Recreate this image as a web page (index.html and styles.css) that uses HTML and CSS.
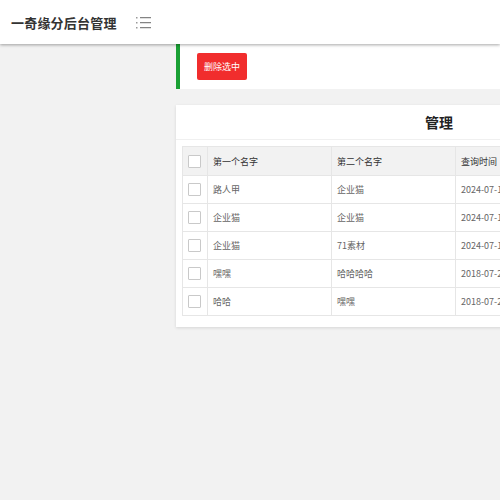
FILE: index.html
```html
<!DOCTYPE html>
<html lang="zh">
<head>
<meta charset="utf-8">
<link rel="stylesheet" href="styles.css">
</head>
<body>
<header class="topbar">
  <div class="brand">一奇缘分后台管理</div>
  <svg class="menu-icon" width="16" height="14" viewBox="0 0 16 14">
    <g fill="#999">
      <rect x="0" y="1" width="1.5" height="1.5"/>
      <rect x="0" y="6" width="1.5" height="1.5"/>
      <rect x="0" y="11" width="1.5" height="1.5"/>
    </g>
    <g fill="#666">
      <rect x="4" y="1.2" width="11" height="1"/>
      <rect x="4" y="6.2" width="11" height="1"/>
      <rect x="4" y="11.2" width="11" height="1"/>
    </g>
  </svg>
</header>
<div class="layout">
  <aside class="side"></aside>
  <main class="main">
    <div class="toolbar">
      <button class="btn-danger">删除选中</button>
    </div>
    <section class="card">
      <h2 class="card-title">管理</h2>
      <div class="card-body">
        <table class="grid">
          <thead>
            <tr><th class="ck"><span class="box"></span></th><th>第一个名字</th><th>第二个名字</th><th>查询时间</th><th>操作</th></tr>
          </thead>
          <tbody>
            <tr><td class="ck"><span class="box"></span></td><td>路人甲</td><td>企业猫</td><td>2024-07-19</td><td></td></tr>
            <tr><td class="ck"><span class="box"></span></td><td>企业猫</td><td>企业猫</td><td>2024-07-19</td><td></td></tr>
            <tr><td class="ck"><span class="box"></span></td><td>企业猫</td><td>71素材</td><td>2024-07-19</td><td></td></tr>
            <tr><td class="ck"><span class="box"></span></td><td>嘿嘿</td><td>哈哈哈哈</td><td>2018-07-20</td><td></td></tr>
            <tr><td class="ck"><span class="box"></span></td><td>哈哈</td><td>嘿嘿</td><td>2018-07-20</td><td></td></tr>
          </tbody>
        </table>
      </div>
    </section>
  </main>
</div>
</body>
</html>
```
FILE: styles.css
```css
html, body {
  margin: 0;
  padding: 0;
  width: 500px;
  height: 500px;
  overflow: hidden;
  background: #f2f2f2;
  font-family: "Noto Sans CJK SC", "Noto Sans", sans-serif;
  color: #333;
}
.topbar {
  height: 44px;
  background: #fff;
  display: flex;
  align-items: center;
  box-shadow: 0 1px 3px rgba(0,0,0,0.35);
  position: relative;
  z-index: 2;
}
.brand {
  margin-left: 11px;
  font-size: 13px;
  font-weight: 700;
  color: #333;
  letter-spacing: 0.2px;
}
.menu-icon {
  margin-left: 19px;
  margin-top: 1px;
}
.layout {
  display: flex;
}
.side {
  width: 176px;
  flex: none;
}
.main {
  width: 526px;
  flex: none;
}
.toolbar {
  height: 45px;
  background: #fff;
  border-left: 4px solid #1aa034;
  box-sizing: border-box;
  padding: 9px 0 0 17px;
}
.btn-danger {
  width: 50px;
  height: 27px;
  border: none;
  border-radius: 2px;
  background: #f12d2d;
  color: #fff;
  font-family: inherit;
  font-size: 9px;
  padding: 0;
  display: block;
}
.card {
  margin-top: 16px;
  background: #fff;
  box-shadow: 0 1px 3px rgba(0,0,0,0.12);
  padding-bottom: 11px;
}
.card-title {
  margin: 0;
  height: 34px;
  line-height: 34px;
  text-align: center;
  font-size: 14px;
  font-weight: 700;
  color: #222;
  border-bottom: 1px solid #f0f0f0;
}
.card-body {
  padding: 6px 6px 0;
}
.grid {
  border-collapse: collapse;
  width: 640px;
  font-size: 9px;
  color: #666;
}
.grid th, .grid td {
  border: 1px solid #e6e6e6;
  text-align: left;
  padding: 0 5px;
  height: 27px;
  font-weight: 400;
  white-space: nowrap;
}
.grid th {
  background: #f2f2f2;
  color: #333;
  height: 28px;
}
.grid th:nth-child(2), .grid td:nth-child(2),
.grid th:nth-child(3), .grid td:nth-child(3),
.grid th:nth-child(4), .grid td:nth-child(4) {
  width: 113px;
}
.grid .ck {
  width: 14px;
  padding: 0 5px;
}
.box {
  display: block;
  width: 11px;
  height: 11px;
  border: 1px solid #c9c9c9;
  background: #fff;
  border-radius: 1px;
}
```
